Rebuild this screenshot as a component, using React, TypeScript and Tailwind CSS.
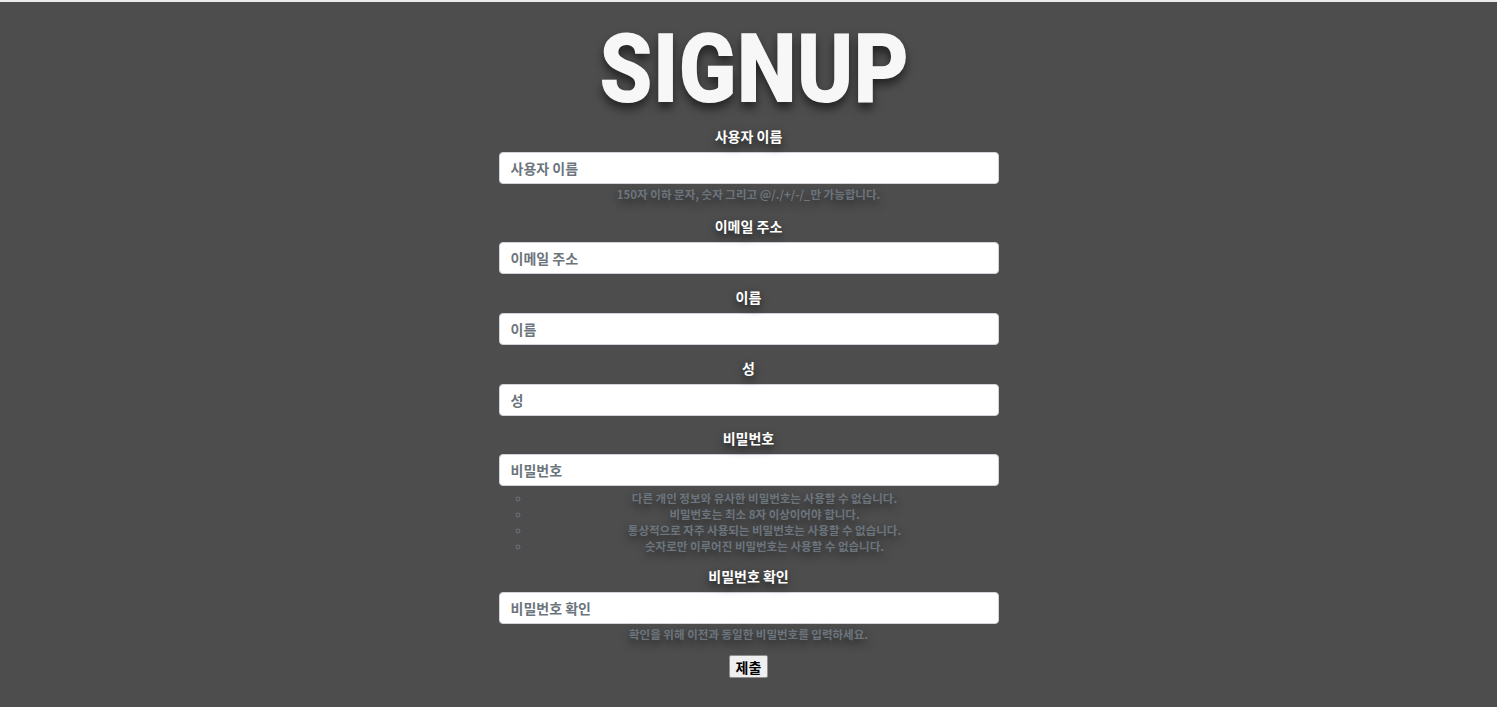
import React from "react";

const ko = { fontFamily: '"Noto Sans CJK KR", "Noto Sans", sans-serif' };

function Label({ children }: { children: React.ReactNode }) {
  return (
    <label
      className="block text-center text-[14px] leading-[20px] font-bold text-white [text-shadow:0_4px_8px_rgba(0,0,0,0.6)]"
      style={ko}
    >
      <span className="relative -top-[1px]">{children}</span>
    </label>
  );
}

function Input({ placeholder }: { placeholder: string }) {
  return (
    <input
      placeholder={placeholder}
      className="mt-[5px] block h-[32px] w-full rounded-[4px] border border-[#ced4da] bg-white px-[11px] text-[14px] font-bold text-[#333] placeholder:text-[#6c757d] outline-none"
      style={ko}
    />
  );
}

function Help({ children }: { children: React.ReactNode }) {
  return (
    <div
      className="mt-[2px] text-center text-[11.5px] leading-[16px] font-bold text-[#6c757d] [text-shadow:0_4px_8px_rgba(0,0,0,0.5)]"
      style={ko}
    >
      {children}
    </div>
  );
}

export default function App() {
  return (
    <div className="min-h-[707px] w-full bg-[#4d4d4d]">
      <div className="h-[2px] w-full bg-[#ececec]" />
      <div className="flex flex-col items-center">
        <h1
          className="mt-[19px] pl-[13px] text-[97px] leading-[96px] font-black tracking-[0px] scale-x-[0.88] text-[#f7f7f7] [text-shadow:0_6px_10px_rgba(0,0,0,0.55)]"
          style={{ fontFamily: "Roboto, sans-serif" }}
        >
          SIGNUP
        </h1>
        <form className="mt-[10px] w-[500px]" onSubmit={(e) => e.preventDefault()}>
          <div>
            <Label>사용자 이름</Label>
            <Input placeholder="사용자 이름" />
            <Help>150자 이하 문자, 숫자 그리고 @/./+/-/_만 가능합니다.</Help>
          </div>
          <div className="mt-[15px]">
            <Label>이메일 주소</Label>
            <Input placeholder="이메일 주소" />
          </div>
          <div className="mt-[14px]">
            <Label>이름</Label>
            <Input placeholder="이름" />
          </div>
          <div className="mt-[14px]">
            <Label>성</Label>
            <Input placeholder="성" />
          </div>
          <div className="mt-[13px]">
            <Label>비밀번호</Label>
            <Input placeholder="비밀번호" />
            <ul
              className="mt-[4px] list-[circle] pl-[32px] text-center text-[11.5px] leading-[16px] font-bold text-[#6c757d] marker:text-[#6c757d] [text-shadow:0_4px_8px_rgba(0,0,0,0.5)]"
              style={ko}
            >
              <li>다른 개인 정보와 유사한 비밀번호는 사용할 수 없습니다.</li>
              <li>비밀번호는 최소 8자 이상이어야 합니다.</li>
              <li>통상적으로 자주 사용되는 비밀번호는 사용할 수 없습니다.</li>
              <li>숫자로만 이루어진 비밀번호는 사용할 수 없습니다.</li>
            </ul>
          </div>
          <div className="mt-[13px]">
            <Label>비밀번호 확인</Label>
            <Input placeholder="비밀번호 확인" />
            <Help>확인을 위해 이전과 동일한 비밀번호를 입력하세요.</Help>
          </div>
          <div className="mt-[13px] flex justify-center">
            <button
              type="submit"
              className="h-[23px] rounded-[2px] border border-[#8f8f8f] bg-[#efefef] px-[6px] text-[14px] leading-[20px] font-bold text-black"
              style={ko}
            >
              제출
            </button>
          </div>
        </form>
      </div>
    </div>
  );
}
